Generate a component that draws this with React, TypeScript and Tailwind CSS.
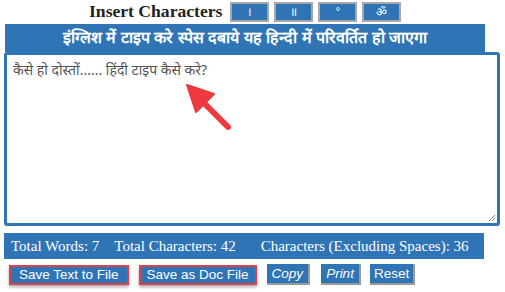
import React from "react";

const blue = "bg-[#2f74b5]";

export default function App() {
  const chars = ["।", "॥", "°", "ॐ"];
  return (
    <div className="w-[505px] h-[292px] bg-white overflow-hidden relative font-['Liberation_Sans',sans-serif]">
      <div className="flex items-center h-[24px] pl-[89px] gap-[5px]">
        <span className="font-['Liberation_Serif',serif] font-bold text-[17.6px] text-[#222] mr-[3px] leading-none">
          Insert Characters
        </span>
        {chars.map((c) => (
          <div
            key={c}
            className={`w-[39px] h-[20px] ${blue} border-2 border-[#a8a8a8] text-white text-[12px] flex items-center justify-center leading-none`}
          >
            {c}
          </div>
        ))}
      </div>
      <div className="pl-[5px]">
        <div className={`w-[480px] h-[28px] ${blue} text-white font-bold text-[16px] flex items-center justify-center leading-none`}>
          इंग्लिश में टाइप करे स्पेस दबाये यह हिन्दी में परिवर्तित हो जाएगा
        </div>
      </div>
      <div className="pl-[4px] pr-[5px]">
        <div className="h-[174px] border-[3px] border-[#2f74b5] rounded-[3px] relative px-[6px] pt-[6px]">
          <div className="text-[14px] text-[#555] font-['Noto_Sans',sans-serif] leading-[18px]">
            कैसे हो दोस्तों...... हिंदी टाइप कैसे करे?
          </div>
          <svg className="absolute right-[1px] bottom-[1px]" width="8" height="8" viewBox="0 0 8 8">
            <path d="M1 7 L7 1 M4 7 L7 4" stroke="#888" strokeWidth="1" />
          </svg>
        </div>
      </div>
      <div className="pl-[4px] mt-[7px]">
        <div className={`w-[480px] h-[26px] ${blue} text-white font-['Liberation_Serif',serif] text-[15px] flex items-center pl-[7px] leading-none`}>
          <span>Total Words: 7</span>
          <span className="ml-[15px]">Total Characters: 42</span>
          <span className="ml-[25px]">Characters (Excluding Spaces): 36</span>
        </div>
      </div>
      <div className="flex items-center mt-[5px] pl-[9px] text-white text-[13.5px] leading-none">
        <div className="border-2 border-[#d9434e] shadow-[0_2px_3px_rgba(0,0,0,0.35)]">
          <div className={`${blue} h-[16px] px-[8px] flex items-center`}>Save Text to File</div>
        </div>
        <div className="ml-[10px] border-2 border-[#d9434e] shadow-[0_2px_3px_rgba(0,0,0,0.35)]">
          <div className={`${blue} h-[16px] px-[6px] flex items-center`}>Save as Doc File</div>
        </div>
        <div className={`ml-[10px] ${blue} h-[21px] px-[5px] flex items-center italic border-b-2 border-r-2 border-[#9a9a9a]`}>Copy</div>
        <div className={`ml-[11px] ${blue} h-[21px] px-[5px] flex items-center italic border-b-2 border-r-2 border-[#9a9a9a]`}>Print</div>
        <div className={`ml-[9px] ${blue} h-[21px] px-[4px] flex items-center border-b-2 border-r-2 border-[#9a9a9a]`}>Reset</div>
      </div>
      <svg className="absolute left-0 top-0 pointer-events-none" width="505" height="292">
        <line x1="228" y1="127" x2="200" y2="99" stroke="#ee3a3f" strokeWidth="6" strokeLinecap="round" />
        <polygon points="187,85 214,94 196,112" fill="#ee3a3f" stroke="#ee3a3f" strokeWidth="2" strokeLinejoin="round" />
      </svg>
    </div>
  );
}
